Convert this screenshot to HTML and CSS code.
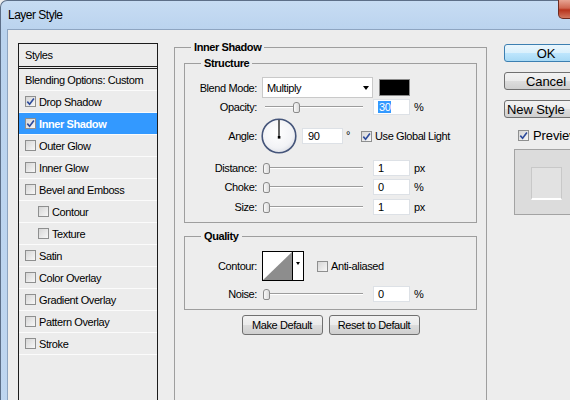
FILE: index.html
```html
<!DOCTYPE html>
<html>
<head>
<meta charset="utf-8">
<title>Layer Style</title>
<link rel="stylesheet" href="styles.css">
</head>
<body>
<div class="window">
  <div class="titlebar">
    <span class="title">Layer Style</span>
    <span class="close"></span>
  </div>
  <div class="client">
    <div class="styles-list">
      <div class="list-head">Styles</div>
      <div class="list-row">Blending Options: Custom</div>
      <div class="list-row"><span class="cb"><svg viewBox="0 0 9 9"><path d="M1.3 4.6 L3.6 7.2 L7.9 1.4"/></svg></span>Drop Shadow</div>
      <div class="list-row selected"><span class="cb"><svg viewBox="0 0 9 9"><path d="M1.3 4.6 L3.6 7.2 L7.9 1.4"/></svg></span>Inner Shadow</div>
      <div class="list-row"><span class="cb"></span>Outer Glow</div>
      <div class="list-row"><span class="cb"></span>Inner Glow</div>
      <div class="list-row"><span class="cb"></span>Bevel and Emboss</div>
      <div class="list-row sub"><span class="cb"></span>Contour</div>
      <div class="list-row sub"><span class="cb"></span>Texture</div>
      <div class="list-row"><span class="cb"></span>Satin</div>
      <div class="list-row"><span class="cb"></span>Color Overlay</div>
      <div class="list-row"><span class="cb"></span>Gradient Overlay</div>
      <div class="list-row"><span class="cb"></span>Pattern Overlay</div>
      <div class="list-row"><span class="cb"></span>Stroke</div>
    </div>

    <fieldset class="group outer">
      <legend>Inner Shadow</legend>
      <div class="outer-body">
        <fieldset class="group">
          <legend>Structure</legend>
          <div class="group-body structure">
            <div class="row row-blend">
              <span class="lbl">Blend Mode:</span>
              <div class="select"><span>Multiply</span><span class="arrow"></span></div>
              <span class="swatch"></span>
            </div>
            <div class="row row-opacity">
              <span class="lbl">Opacity:</span>
              <div class="slider"><span class="thumb" style="margin-left:31px"></span></div>
              <div class="field"><span class="sel">30</span></div>
              <span class="unit">%</span>
            </div>
            <div class="row row-angle">
              <span class="lbl">Angle:</span>
              <svg class="dial" viewBox="0 0 36 36" width="36" height="36">
                <defs>
                  <radialGradient id="dg" cx="0.45" cy="0.4" r="0.65">
                    <stop offset="0" stop-color="#ffffff"/>
                    <stop offset="0.7" stop-color="#f2f3f6"/>
                    <stop offset="1" stop-color="#d9dce4"/>
                  </radialGradient>
                </defs>
                <circle cx="18" cy="18" r="16.8" fill="url(#dg)" stroke="#45557a" stroke-width="1.6"/>
                <line x1="18" y1="2" x2="18" y2="19" stroke="#000" stroke-width="1.2"/>
                <rect x="16.8" y="18" width="2.6" height="2.6" fill="#000"/>
              </svg>
              <div class="field wide">90</div>
              <span class="deg">°</span>
              <span class="cb"><svg viewBox="0 0 9 9"><path d="M1.3 4.6 L3.6 7.2 L7.9 1.4"/></svg></span>
              <span class="cb-text">Use Global Light</span>
            </div>
            <div class="row row-distance">
              <span class="lbl">Distance:</span>
              <div class="slider"><span class="thumb" style="margin-left:1px"></span></div>
              <div class="field">1</div>
              <span class="unit">px</span>
            </div>
            <div class="row row-choke">
              <span class="lbl">Choke:</span>
              <div class="slider"><span class="thumb" style="margin-left:1px"></span></div>
              <div class="field">0</div>
              <span class="unit">%</span>
            </div>
            <div class="row row-size">
              <span class="lbl">Size:</span>
              <div class="slider"><span class="thumb" style="margin-left:1px"></span></div>
              <div class="field">1</div>
              <span class="unit">px</span>
            </div>
          </div>
        </fieldset>

        <fieldset class="group quality">
          <legend>Quality</legend>
          <div class="group-body quality-body">
            <div class="row row-contour">
              <span class="lbl">Contour:</span>
              <div class="contour">
                <svg class="curve" viewBox="0 0 29 28" width="29" height="28">
                  <rect width="29" height="28" fill="#fff"/>
                  <polygon points="0,28 29,0 29,28" fill="#8d8d8d"/>
                </svg>
                <span class="contour-drop"><span class="arrow small"></span></span>
              </div>
              <span class="cb"></span>
              <span class="cb-text">Anti-aliased</span>
            </div>
            <div class="row row-noise">
              <span class="lbl">Noise:</span>
              <div class="slider"><span class="thumb" style="margin-left:1px"></span></div>
              <div class="field">0</div>
              <span class="unit">%</span>
            </div>
          </div>
        </fieldset>

        <div class="defaults">
          <button class="btn">Make Default</button>
          <button class="btn">Reset to Default</button>
        </div>
      </div>
    </fieldset>

    <div class="side">
      <button class="btn big default">OK</button>
      <button class="btn big">Cancel</button>
      <button class="btn big left">New Style</button>
      <div class="preview-row">
        <span class="cb"><svg viewBox="0 0 9 9"><path d="M1.3 4.6 L3.6 7.2 L7.9 1.4"/></svg></span>
        <span class="preview-label">Preview</span>
      </div>
      <div class="preview-box">
        <div class="preview-swatch"></div>
      </div>
    </div>
  </div>
</div>
</body>
</html>
```

FILE: styles.css
```css
html, body {
  margin: 0;
  padding: 0;
}

body {
  width: 570px;
  height: 400px;
  overflow: hidden;
  background: #ededed;
  font-family: "Liberation Sans", Arial, sans-serif;
  font-size: 11px;
  letter-spacing: -0.4px;
  color: #000;
}

.window {
  width: 610px;
  height: 430px;
  display: flex;
  flex-direction: column;
  background: linear-gradient(#c7dcf3, #bad3ee 30px, #bfd6f0);
  border-top: 1px solid #5d6f88;
  border-left: 1px solid #5d6f88;
  border-top-left-radius: 7px;
}

.titlebar {
  height: 28px;
  display: flex;
  align-items: flex-start;
  padding-left: 7px;
  flex: none;
}

.title {
  margin-top: 7px;
  line-height: 14px;
  font-size: 12px;
  letter-spacing: -0.5px;
}

.close {
  margin-left: auto;
  margin-right: 10px;
  margin-top: -1px;
  width: 43px;
  height: 19px;
  box-sizing: border-box;
  border: 1px solid #6e2a1f;
  border-top: none;
  border-bottom-left-radius: 5px;
  background: linear-gradient(#e7a493, #cf6650 45%, #b8331c 55%, #d2775f);
}

.client {
  flex: 1;
  margin-left: 6px;
  border-left: 1px solid #8ea5c1;
  border-top: 1px solid #8ea5c1;
  background: #ededed;
  display: flex;
  padding: 11px 0 0 10px;
}

/* Styles list */
.styles-list {
  flex: none;
  width: 140px;
  margin-top: 2px;
  box-sizing: border-box;
  border: 1px solid #1c1c1c;
  background: #ececec;
}

.list-head {
  height: 22px;
  display: flex;
  align-items: center;
  padding-left: 6px;
  border-bottom: 3px double #1c1c1c;
}

.list-row {
  height: 21px;
  display: flex;
  align-items: center;
  padding-left: 6px;
  border-bottom: 1px solid #fbfbfb;
}

.list-row.sub {
  padding-left: 19px;
}

.list-row.selected {
  background: #3399ff;
  color: #fff;
  font-weight: bold;
}

/* checkbox */
.cb {
  flex: none;
  width: 11px;
  height: 11px;
  box-sizing: border-box;
  border: 1px solid #8e8f8f;
  background: linear-gradient(135deg, #d6d6d6, #f7f7f7);
  margin-right: 3px;
  display: inline-flex;
  align-items: center;
  justify-content: center;
}

.cb svg {
  width: 9px;
  height: 9px;
}

.cb path {
  fill: none;
  stroke: #2d4b9c;
  stroke-width: 1.6;
}

/* fieldsets */
.group {
  margin: 0;
  padding: 0;
  min-width: 0;
  border: 1px solid #9e9e9e;
  box-sizing: border-box;
}

.group legend {
  margin-left: 16px;
  padding: 0 3px;
  font-weight: bold;
  line-height: 13px;
}

.outer {
  flex: none;
  width: 313px;
  margin-left: 16px;
}

.outer-body {
  padding: 3px 9px 0;
}

.group-body {
  display: flex;
  flex-direction: column;
}

.structure {
  padding: 7px 0 7px;
}

.quality {
  margin-top: 7px;
}

.quality-body {
  padding: 8px 0 7px;
}

.row {
  display: flex;
  align-items: center;
}

.lbl {
  flex: none;
  width: 72px;
  text-align: right;
  margin-right: 5px;
}

.row-blend { height: 21px; }
.row-opacity { height: 16px; margin-top: 1px; }
.row-angle { height: 36px; margin-top: 3px; }
.row-distance { height: 16px; margin-top: 6px; }
.row-choke { height: 16px; margin-top: 3px; }
.row-size { height: 16px; margin-top: 4px; }
.row-contour { height: 30px; }
.row-noise { height: 16px; margin-top: 5px; }

.select {
  width: 111px;
  height: 21px;
  box-sizing: border-box;
  background: #fff;
  border: 1px solid #c9c9c9;
  display: flex;
  align-items: center;
  justify-content: space-between;
  padding: 0 3px 0 4px;
}

.arrow {
  width: 0;
  height: 0;
  border-left: 3.5px solid transparent;
  border-right: 3.5px solid transparent;
  border-top: 4px solid #000;
}

.arrow.small {
  border-left-width: 2.5px;
  border-right-width: 2.5px;
  border-top-width: 3px;
}

.swatch {
  width: 31px;
  height: 17px;
  box-sizing: border-box;
  margin-left: 6px;
  background: #000;
  border: 1px solid #8a8a8a;
}

.slider {
  flex: none;
  width: 104px;
  height: 12px;
  display: flex;
  align-items: center;
  background:
    linear-gradient(#9c9c9c, #9c9c9c) 3px 5px / 98px 1px no-repeat,
    linear-gradient(#ffffff, #ffffff) 3px 6px / 98px 1px no-repeat;
}

.thumb {
  width: 7px;
  height: 11px;
  box-sizing: border-box;
  border: 1px solid #8b8b8b;
  border-radius: 3px 3px 2px 2px;
  background: linear-gradient(90deg, #f8f8f8, #dcdcdc);
}

.field {
  flex: none;
  width: 37px;
  height: 16px;
  box-sizing: border-box;
  margin-left: 7px;
  background: #fff;
  border: 1px solid #dde1e6;
  padding-left: 4px;
  display: flex;
  align-items: center;
}

.field.wide {
  width: 41px;
  margin-left: 5px;
  padding-left: 5px;
}

.sel {
  background: #3399ff;
  color: #fff;
  padding: 0 1px;
}

.unit {
  margin-left: 4px;
}

.dial {
  flex: none;
  margin-left: -1px;
}

.deg {
  margin: 0 11px 0 3px;
  align-self: flex-start;
  margin-top: 11px;
}

.cb-text {
  white-space: nowrap;
}

.contour {
  flex: none;
  width: 42px;
  height: 30px;
  box-sizing: border-box;
  border: 1px solid #000;
  display: flex;
  margin-right: 13px;
}

.curve {
  display: block;
}

.contour-drop {
  flex: 1;
  border-left: 1px solid #000;
  background: #fff;
  display: flex;
  justify-content: center;
  padding-top: 10px;
  box-sizing: border-box;
}

.defaults {
  display: flex;
  justify-content: center;
  gap: 6px;
  margin-top: 5px;
}

.btn {
  font-family: "Liberation Sans", Arial, sans-serif;
  font-size: 11px;
  letter-spacing: -0.4px;
  color: #000;
  height: 20px;
  padding: 0 8px;
  border: 1px solid #707070;
  border-radius: 3px;
  background: linear-gradient(#f2f2f2, #ebebeb 50%, #dddddd 50%, #cfcfcf);
  display: flex;
  align-items: center;
  justify-content: center;
}

.defaults .btn:first-child { width: 81px; }
.defaults .btn:last-child { width: 91px; }

/* right column */
.side {
  flex: none;
  width: 90px;
  margin-left: 17px;
  margin-top: 3px;
  display: flex;
  flex-direction: column;
}

.btn.big {
  width: 84px;
  height: 18px;
  font-size: 13px;
  letter-spacing: -0.1px;
  margin-bottom: 10px;
  padding: 0 4px;
}

.btn.default {
  border-color: #3c7fb1;
  background: linear-gradient(#eaf6fd, #d9f0fc 50%, #bee6fd 50%, #a7d9f5);
}

.btn.left {
  justify-content: flex-start;
  padding-left: 2px;
}

.preview-row {
  display: flex;
  align-items: center;
  height: 14px;
  margin-left: 14px;
}

.preview-row .cb {
  margin-right: 4px;
}

.preview-label {
  font-size: 13px;
  letter-spacing: -0.1px;
}

.preview-box {
  margin-top: 7px;
  margin-left: 10px;
  height: 66px;
  box-sizing: border-box;
  border: 1px solid #a3a3a3;
  background: #dcdcdc;
  padding: 17px 0 0 16px;
}

.preview-swatch {
  width: 31px;
  height: 33px;
  box-sizing: border-box;
  border: 1px solid #c8c8c8;
  border-bottom: 2px solid #ffffff;
  background: #e2e2e2;
}
```
